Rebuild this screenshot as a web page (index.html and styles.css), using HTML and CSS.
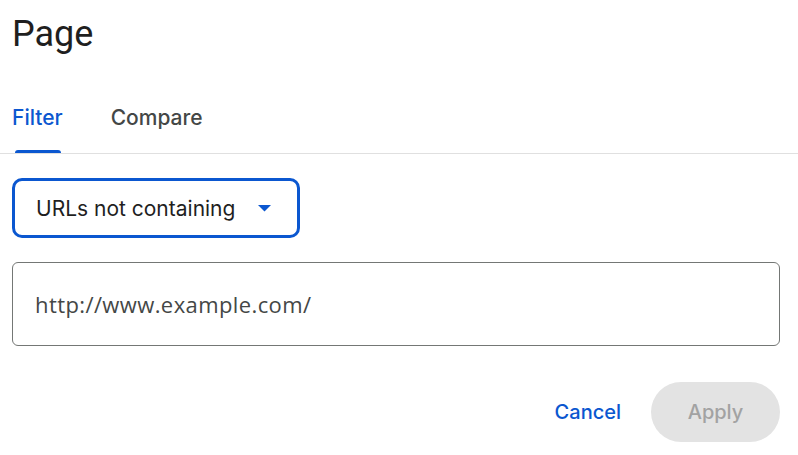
FILE: index.html
```html
<!DOCTYPE html>
<html>
<head>
<meta charset="utf-8">
<link rel="stylesheet" href="styles.css">
</head>
<body>
<div class="dialog">
  <h1 class="title">Page</h1>
  <div class="tabs">
    <div class="tab active">Filter</div>
    <div class="tab">Compare</div>
  </div>
  <div class="body">
    <div class="select">
      <span class="select-text">URLs not containing</span>
      <svg class="arrow" width="13" height="7" viewBox="0 0 13 7"><path d="M0 0h13L6.5 6.5z" fill="#0b57d0"/></svg>
    </div>
    <div class="input">http://www.example.com/</div>
    <div class="actions">
      <div class="btn text">Cancel</div>
      <div class="btn filled">Apply</div>
    </div>
  </div>
</div>
</body>
</html>
```
FILE: styles.css
```css
html, body {
  margin: 0;
  padding: 0;
  background: #fff;
}
body {
  font-family: Inter, Roboto, "Liberation Sans", sans-serif;
  color: #1f1f1f;
}
.dialog {
  width: 798px;
}
.title {
  margin: 0;
  padding: 12px 0 0 12px;
  font-family: Roboto, "Liberation Sans", sans-serif;
  font-size: 36px;
  line-height: 44px;
  font-weight: 400;
  height: 69px;
  box-sizing: border-box;
}
.tabs {
  display: flex;
  gap: 48px;
  padding-left: 12px;
  border-bottom: 1px solid #e0e0e0;
}
.tab {
  position: relative;
  height: 84px;
  display: flex;
  align-items: center;
  padding-top: 12px;
  box-sizing: border-box;
  font-size: 21px;
  font-weight: 500;
  color: #444746;
}
.tab.active {
  color: #0b57d0;
}
.tab.active::after {
  content: "";
  position: absolute;
  left: 3px;
  right: 2px;
  bottom: 0;
  height: 3px;
  background: #0b57d0;
  border-radius: 3px 3px 0 0;
}
.body {
  padding: 24px 18px 0 12px;
}
.select {
  width: 288px;
  height: 60px;
  box-sizing: border-box;
  border: 3px solid #0b57d0;
  border-radius: 10px;
  display: flex;
  align-items: center;
  justify-content: space-between;
  padding: 0 26px 0 21px;
  font-size: 21px;
  color: #1f1f1f;
}
.arrow {
  display: block;
  margin-top: 1px;
}
.input {
  margin-top: 24px;
  height: 84px;
  box-sizing: border-box;
  border: 1px solid #747775;
  border-radius: 6px;
  display: flex;
  align-items: center;
  padding-left: 22px;
  font-family: "Open Sans", Roboto, sans-serif;
  font-size: 22px;
  letter-spacing: 0.4px;
  color: #444746;
}
.actions {
  margin-top: 36px;
  display: flex;
  justify-content: flex-end;
  align-items: center;
}
.btn {
  height: 60px;
  display: flex;
  align-items: center;
  font-size: 20px;
  font-weight: 500;
  border-radius: 30px;
}
.btn.text {
  color: #0b57d0;
  padding: 0 30px;
}
.btn.filled {
  background: #e3e3e3;
  color: #a2a2a2;
  width: 129px;
  justify-content: center;
}
```
